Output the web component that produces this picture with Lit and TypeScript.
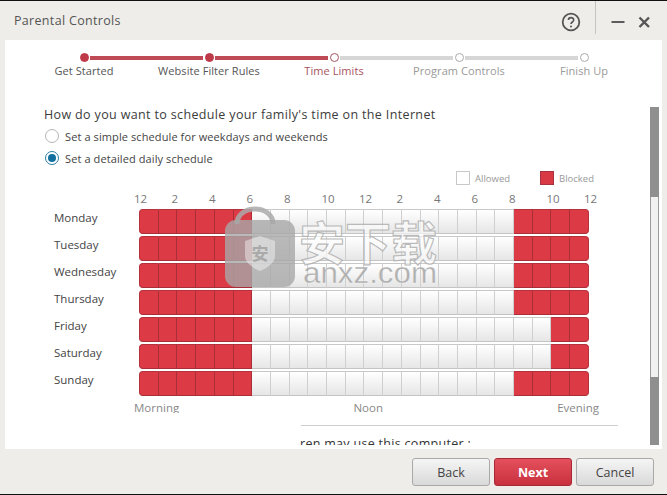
import { LitElement, html, css, svg } from "lit";
import { customElement } from "lit/decorators.js";
import { classMap } from "lit/directives/class-map.js";

const STEPS = [
  { label: "Get Started", state: "done" },
  { label: "Website Filter Rules", state: "done" },
  { label: "Time Limits", state: "current" },
  { label: "Program Controls", state: "todo" },
  { label: "Finish Up", state: "todo" },
];
const HOURS = [12, 2, 4, 6, 8, 10, 12, 2, 4, 6, 8, 10, 12];
// day, first open hour slot, first blocked evening slot
const DAYS: [string, number, number][] = [
  ["Monday", 6, 20],
  ["Tuesday", 6, 20],
  ["Wednesday", 6, 20],
  ["Thursday", 6, 20],
  ["Friday", 6, 22],
  ["Saturday", 6, 22],
  ["Sunday", 6, 20],
];

@customElement("app-root")
export class AppRoot extends LitElement {
  static styles = css`
    :host {
      display: block;
      width: 667px;
      height: 495px;
      font-family: "Open Sans", "Noto Sans", sans-serif;
      color: #444;
      overflow: hidden;
    }
    .window {
      height: 495px;
      box-sizing: border-box;
      border-top: 1px solid #111;
      border-bottom: 1px solid #111;
      background: #eeede9;
      display: flex;
      flex-direction: column;
    }
    .titlebar {
      height: 39px;
      flex: none;
      display: flex;
      align-items: flex-start;
    }
    .title {
      margin: 11px 0 0 14px;
      font-size: 12.5px;
      line-height: 17px;
      letter-spacing: 0.32px;
      color: #555;
      flex: 1;
    }
    .help {
      margin-top: 11px;
      display: block;
    }
    .sep {
      width: 1px;
      height: 33px;
      background: #c4c4c2;
      margin-left: 14px;
    }
    .winbtn {
      display: block;
      margin-top: 12px;
    }
    .min {
      margin-left: 15px;
    }
    .close {
      margin: 13px 16px 0 12px;
    }
    .panel {
      position: relative;
      flex: none;
      height: 409px;
      margin: 0 5px;
      background: #fff;
      display: flex;
    }
    .content {
      flex: 1;
      min-width: 0;
      height: 405px;
      overflow: hidden;
    }
    .track {
      display: flex;
      align-items: center;
      margin: 13px 0 0 74.5px;
      height: 9px;
    }
    .dot {
      width: 9px;
      height: 9px;
      box-sizing: border-box;
      border-radius: 50%;
      flex: none;
      background: #fff;
      border: 1px solid #aaa;
    }
    .dot.done {
      background: #bf3a48;
      border-color: #bf3a48;
    }
    .dot.current {
      border-color: #a85560;
    }
    .line {
      width: 113px;
      height: 4px;
      margin: 0 1.5px;
      background: #d6d6d6;
      flex: none;
    }
    .line.done {
      background: #bd4a55;
    }
    .labels {
      display: grid;
      grid-template-columns: repeat(5, 125px);
      margin: 1px 0 0 16.5px;
      font-size: 11px;
      line-height: 16px;
      letter-spacing: 0.07px;
      text-align: center;
    }
    .lab-done {
      color: #555;
    }
    .lab-current {
      color: #a6525c;
    }
    .lab-todo {
      color: #999;
    }
    .question {
      margin: 27px 0 0 39px;
      font-size: 12.5px;
      line-height: 18px;
      letter-spacing: 0.355px;
      color: #3c3c3c;
      white-space: nowrap;
    }
    .radios {
      margin: 1px 0 0 40px;
      display: flex;
      flex-direction: column;
    }
    .radio {
      height: 22px;
      display: flex;
      align-items: center;
      gap: 6px;
      font-size: 11px;
      letter-spacing: 0.1px;
      color: #444;
      white-space: nowrap;
    }
    .circle {
      width: 14px;
      height: 14px;
      box-sizing: border-box;
      border: 1px solid #b5b5b5;
      border-radius: 50%;
      background: #fff;
      flex: none;
    }
    .circle.on {
      border-color: #2c7fa6;
      display: flex;
      align-items: center;
      justify-content: center;
    }
    .circle.on::after {
      content: "";
      width: 8px;
      height: 8px;
      border-radius: 50%;
      background: #11709f;
    }
    .legend {
      margin: 2px 0 0 451px;
      height: 14px;
      display: flex;
      align-items: center;
      font-size: 9.5px;
      color: #999;
    }
    .legend-text {
      width: 70px;
      padding-left: 5px;
      box-sizing: border-box;
    }
    .swatch {
      width: 14px;
      height: 14px;
      box-sizing: border-box;
      border: 1px solid #c8c8c8;
      background: #fff;
      flex: none;
    }
    .swatch.blocked {
      background: #d93945;
      border-color: #a83340;
    }
    .hours {
      display: flex;
      margin: 8px 0 0 129px;
      height: 14px;
      font-size: 11.5px;
      line-height: 12px;
      color: #777;
    }
    .hour {
      width: 37.5px;
      flex: none;
    }
    .row {
      display: flex;
      height: 25px;
      margin-top: 2px;
      align-items: stretch;
    }
    .day {
      width: 134px;
      box-sizing: border-box;
      padding-left: 49px;
      font-size: 11.5px;
      line-height: 18px;
      color: #444;
      flex: none;
    }
    .cells {
      width: 450px;
      display: flex;
      flex: none;
    }
    .cell {
      flex: 1 1 0;
      box-sizing: border-box;
      border-right: 1px solid #cfcfcf;
      border-top: 1px solid #c8c8c8;
      border-bottom: 1px solid #c4c4c4;
      background: linear-gradient(#ffffff, #e6e6e6);
    }
    .cell.red {
      background: #dc3a45;
      border-right-color: #a92e38;
      border-top-color: #b5323c;
      border-bottom-color: #a92e38;
    }
    .cell.first {
      border-radius: 4px 0 0 4px;
      border-left: 1px solid #b5323c;
    }
    .cell.last {
      border-radius: 0 4px 4px 0;
      border-right: 1px solid #b5323c;
    }
    .periods {
      display: flex;
      justify-content: space-between;
      width: 465px;
      margin: 4px 0 0 129px;
      font-size: 11.5px;
      line-height: 16px;
      color: #888;
      align-items: flex-start;
    }
    .morning {
      height: 13px;
      overflow: hidden;
    }
    .rule {
      height: 1px;
      width: 317px;
      margin: 9px 0 0 296px;
      background: #cfcfcf;
    }
    .tail {
      margin: 9px 0 0 295px;
      font-size: 12.5px;
      line-height: 18px;
      letter-spacing: 0.3px;
      color: #333;
      white-space: nowrap;
    }
    .scroll {
      width: 9px;
      margin: 67px 3px 0 0;
      height: 338px;
      flex: none;
      display: flex;
      flex-direction: column;
      background: #8f8f8f;
    }
    .thumb {
      margin-top: 90px;
      height: 180px;
      box-sizing: border-box;
      background: #f1f1f1;
      border: 1px solid #9a9a9a;
      border-width: 0 1px;
    }
    .watermark {
      position: absolute;
      left: 213px;
      top: 166px;
      display: block;
      pointer-events: none;
    }
    .wm-cjk {
      font-family: "Noto Sans CJK SC", sans-serif;
      font-weight: 700;
      font-size: 46px;
      fill: rgba(255, 255, 255, 0.6);
      stroke: rgba(175, 175, 175, 0.85);
      stroke-width: 1.2px;
    }
    .wm-latin {
      font-family: "Liberation Sans", sans-serif;
      font-size: 29px;
      fill: rgba(165, 165, 165, 0.85);
      stroke: rgba(255, 255, 255, 0.6);
      stroke-width: 0.4px;
    }
    .wm-seal {
      font-family: "Noto Sans CJK SC", sans-serif;
      font-size: 17px;
      font-weight: 700;
      fill: rgba(150, 150, 150, 0.7);
    }
    .footer {
      flex: 1;
      display: flex;
      justify-content: flex-end;
      align-items: flex-start;
      gap: 4px;
      padding: 9px 13px 0 0;
    }
    .btn {
      width: 78px;
      height: 28px;
      box-sizing: border-box;
      border: 1px solid #a9a9a9;
      border-radius: 3px;
      background: linear-gradient(#f5f5f5, #d9d9d9);
      font-family: inherit;
      font-size: 12.5px;
      color: #444;
      padding: 0;
    }
    .btn.primary {
      background: linear-gradient(#e4505d, #c9303e);
      border-color: #a62a36;
      color: #fff;
      font-weight: 700;
    }
  `;

  private cell(index: number, open: number, close: number) {
    const red = index < open || index >= close;
    return html`<div
      class=${classMap({
        cell: true,
        red,
        first: index === 0,
        last: index === 23,
      })}
    ></div>`;
  }

  private watermark() {
    return html`<svg class="watermark" width="225" height="90" viewBox="0 0 225 90">
      ${svg`
        <path d="M19 18 C19 -2 55 -2 55 18" fill="none" stroke="rgba(170,170,170,.85)" stroke-width="5"/>
        <rect x="7" y="14" width="70" height="67" rx="11" fill="rgba(168,168,168,.8)"/>
        <path d="M42 30 L57 35 V50 C57 57 49 62 42 65 C35 62 27 57 27 50 V35 Z" fill="rgba(255,255,255,.42)"/>
        <text class="wm-seal" x="42" y="54" text-anchor="middle">安</text>
        <text class="wm-cjk" x="81" y="54">安下载</text>
        <text class="wm-latin" x="85" y="77" textLength="134" lengthAdjust="spacingAndGlyphs">anxz.com</text>
      `}
    </svg>`;
  }

  render() {
    return html`
      <div class="window">
        <div class="titlebar">
          <div class="title">Parental Controls</div>
          <svg class="help" width="20" height="20" viewBox="0 0 20 20">
            <circle cx="10" cy="10" r="8.3" fill="none" stroke="#555" stroke-width="1.8" />
            <path d="M7.4 8 C7.4 4.8 12.7 4.8 12.7 8 C12.7 10 10 10 10 12" fill="none" stroke="#555" stroke-width="1.6" />
            <circle cx="10" cy="14.6" r="1" fill="#555" />
          </svg>
          <div class="sep"></div>
          <svg class="winbtn min" width="15" height="20" viewBox="0 0 15 20">
            <rect x="0.5" y="8" width="13" height="2" fill="#5c5c5c" />
          </svg>
          <svg class="winbtn close" width="13" height="20" viewBox="0 0 13 20">
            <path d="M1.5 3.5 L11 13 M11 3.5 L1.5 13" stroke="#555" stroke-width="2.4" fill="none" />
          </svg>
        </div>
        <div class="panel">
          <div class="content">
            <div class="track">
              ${STEPS.map(
                (s, i) => html`
                  <span class="dot ${s.state}"></span>
                  ${i < STEPS.length - 1
                    ? html`<span class="line ${i < 2 ? "done" : ""}"></span>`
                    : ""}
                `
              )}
            </div>
            <div class="labels">
              ${STEPS.map((s) => html`<div class="lab-${s.state}">${s.label}</div>`)}
            </div>
            <div class="question">How do you want to schedule your family's time on the Internet</div>
            <div class="radios">
              <label class="radio"><span class="circle"></span>Set a simple schedule for weekdays and weekends</label>
              <label class="radio"><span class="circle on"></span>Set a detailed daily schedule</label>
            </div>
            <div class="legend">
              <span class="swatch"></span>
              <span class="legend-text">Allowed</span>
              <span class="swatch blocked"></span>
              <span class="legend-text">Blocked</span>
            </div>
            <div class="hours">
              ${HOURS.map((h) => html`<span class="hour">${h}</span>`)}
            </div>
            ${DAYS.map(
              ([name, open, close]) => html`
                <div class="row">
                  <div class="day">${name}</div>
                  <div class="cells">
                    ${Array.from({ length: 24 }, (_, i) => this.cell(i, open, close))}
                  </div>
                </div>
              `
            )}
            <div class="periods">
              <span class="morning">Morning</span><span>Noon</span><span>Evening</span>
            </div>
            <div class="rule"></div>
            <div class="tail">ren may use this computer :</div>
          </div>
          <div class="scroll"><div class="thumb"></div></div>
          ${this.watermark()}
        </div>
        <div class="footer">
          <button class="btn">Back</button>
          <button class="btn primary">Next</button>
          <button class="btn">Cancel</button>
        </div>
      </div>
    `;
  }
}
